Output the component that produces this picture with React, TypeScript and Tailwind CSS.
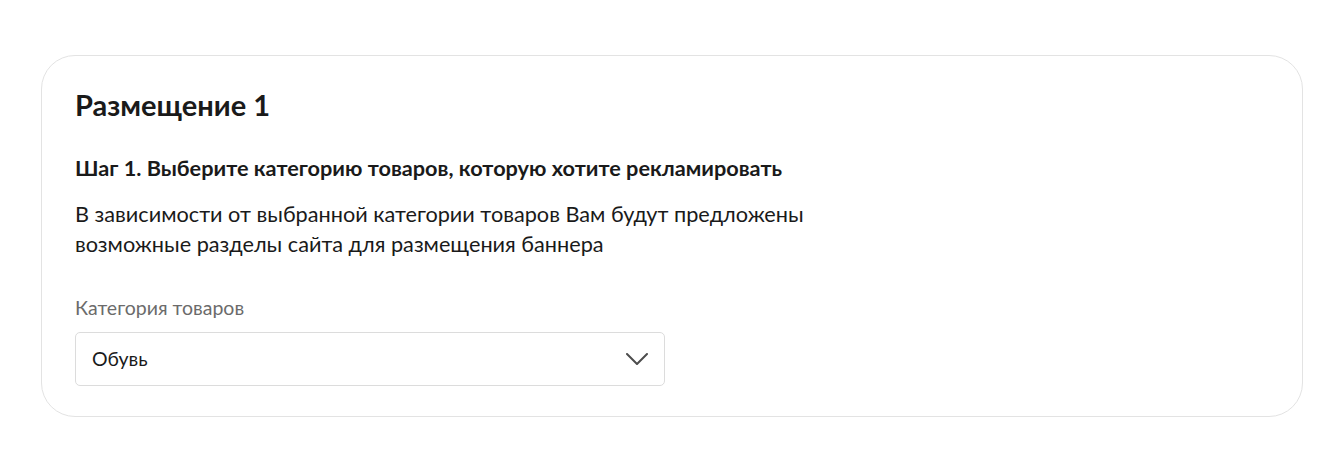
import React from 'react';

const ChevronDown: React.FC = () => (
  <svg width="22" height="12" viewBox="0 0 22 12" fill="none" className="shrink-0">
    <path d="M1 1l10 10L21 1" stroke="#4d4d4d" strokeWidth="2" strokeLinecap="round" strokeLinejoin="round" />
  </svg>
);

/**
 * Блок размещения баннера: шаг 1 — выбор категории товаров
 */
const App: React.FC = () => {
  return (
    <div className="min-h-[472px] bg-white px-[41px] pt-[55px] font-['Lato','Liberation_Sans',sans-serif] text-[#1a1a1a]">
      <section className="rounded-[34px] border border-[#e3e3e3] px-[33px] pt-[31px] pb-[30px]">
        <h1 className="text-[29px] leading-[36px] font-bold">Размещение 1</h1>

        <h2 className="mt-[31px] text-[21.7px] leading-[28px] font-bold">
          Шаг 1. Выберите категорию товаров, которую хотите рекламировать
        </h2>

        <p className="mt-[17px] text-[21.7px] leading-[30px]">
          В зависимости от выбранной категории товаров Вам будут предложены
          <br />
          возможные разделы сайта для размещения баннера
        </p>

        <div className="mt-[37px]">
          <label className="block text-[19.5px] leading-[24px] text-[#6b6b6b]">Категория товаров</label>
          <button
            type="button"
            className="mt-[12px] flex h-[54px] w-[590px] items-center justify-between rounded-[5px] border border-[#dcdcdc] bg-white pl-[16px] pr-[16px] text-left"
          >
            <span className="text-[19.5px] leading-[24px] text-[#1a1a1a]">Обувь</span>
            <ChevronDown />
          </button>
        </div>
      </section>
    </div>
  );
};

export default App;
